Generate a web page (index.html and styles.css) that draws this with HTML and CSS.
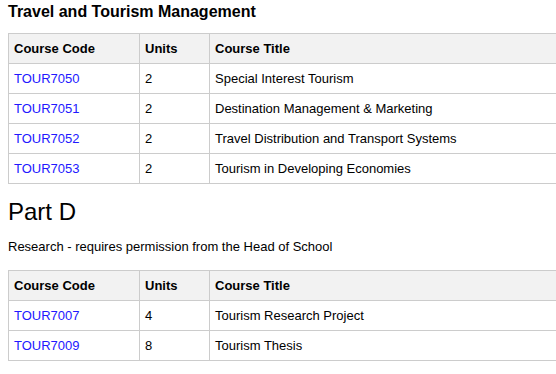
FILE: index.html
```html
<!DOCTYPE html>
<html>
<head>
<meta charset="utf-8">
<link rel="stylesheet" href="styles.css">
</head>
<body>
<h3 class="sub">Travel and Tourism Management</h3>
<div class="wrap">
<table class="courses">
  <thead>
    <tr><th class="c1">Course Code</th><th class="c2">Units</th><th class="c3">Course Title</th></tr>
  </thead>
  <tbody>
    <tr><td><a href="#">TOUR7050</a></td><td>2</td><td>Special Interest Tourism</td></tr>
    <tr><td><a href="#">TOUR7051</a></td><td>2</td><td>Destination Management &amp; Marketing</td></tr>
    <tr><td><a href="#">TOUR7052</a></td><td>2</td><td>Travel Distribution and Transport Systems</td></tr>
    <tr><td><a href="#">TOUR7053</a></td><td>2</td><td>Tourism in Developing Economies</td></tr>
  </tbody>
</table>
</div>
<h2 class="part">Part D</h2>
<p class="note">Research - requires permission from the Head of School</p>
<div class="wrap">
<table class="courses">
  <thead>
    <tr><th class="c1">Course Code</th><th class="c2">Units</th><th class="c3">Course Title</th></tr>
  </thead>
  <tbody>
    <tr><td><a href="#">TOUR7007</a></td><td>4</td><td>Tourism Research Project</td></tr>
    <tr><td><a href="#">TOUR7009</a></td><td>8</td><td>Tourism Thesis</td></tr>
  </tbody>
</table>
</div>
</body>
</html>
```
FILE: styles.css
```css
html, body {
  margin: 0;
  padding: 0;
  background: #fff;
}
body {
  padding: 0 0 0 8px;
  font-family: "Liberation Sans", Arial, sans-serif;
  font-size: 13px;
  color: #000;
  overflow: hidden;
}
.sub {
  font-size: 16px;
  font-weight: bold;
  margin: 0;
  padding-top: 2px;
  line-height: 19px;
  height: 31px;
}
.wrap {
  overflow: hidden;
}
.courses {
  border-collapse: collapse;
  width: 620px;
  table-layout: fixed;
}
.courses th, .courses td {
  border: 1px solid #cccccc;
  padding: 0 5px;
  height: 29px;
  text-align: left;
  vertical-align: middle;
  line-height: 16px;
}
.courses th {
  background: #f2f2f2;
  font-weight: bold;
}
.c1 { width: 120px; }
.c2 { width: 59px; }
.c3 { width: auto; }
.courses a {
  color: #2218ff;
  text-decoration: none;
}
.part {
  font-size: 24px;
  font-weight: normal;
  margin: 0;
  padding-top: 14px;
  line-height: 28px;
}
.note {
  margin: 0;
  padding-top: 13px;
  line-height: 16px;
  height: 31px;
}
```
